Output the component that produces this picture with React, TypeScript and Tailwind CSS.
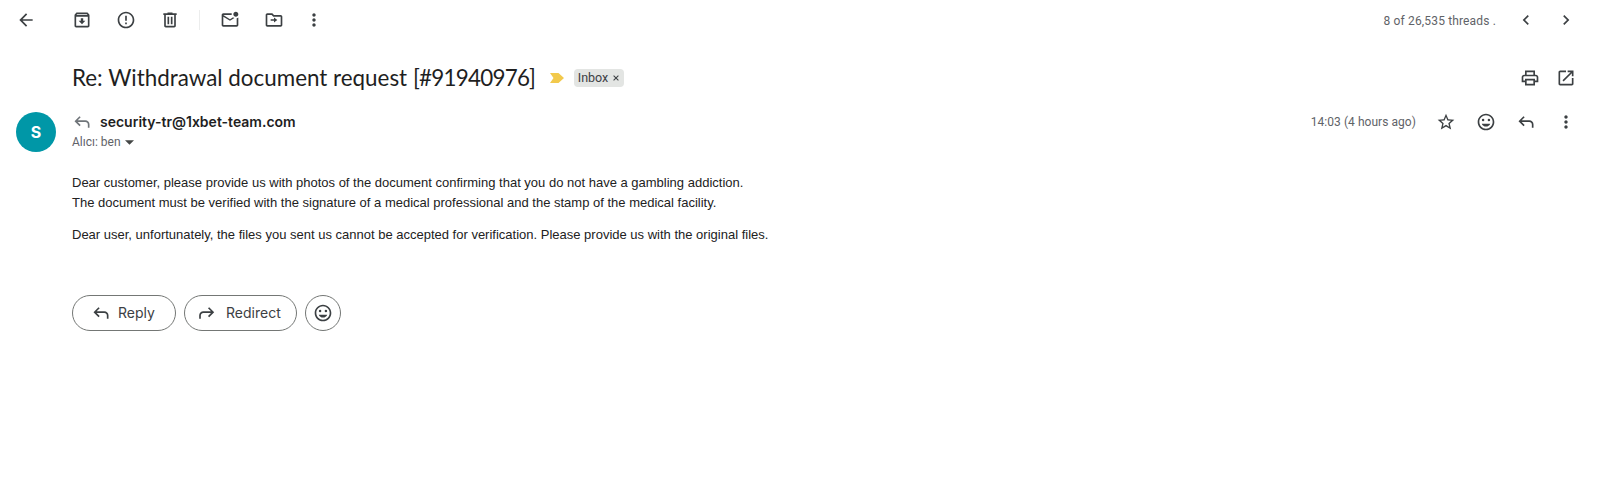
const paths = {
  back: "M20 11H7.83l5.59-5.59L12 4l-8 8 8 8 1.41-1.41L7.83 13H20v-2z",
  archive: "M20.54 5.23l-1.39-1.68C18.88 3.21 18.47 3 18 3H6c-.47 0-.88.21-1.16.55L3.46 5.23C3.17 5.57 3 6.02 3 6.5V19c0 1.1.9 2 2 2h14c1.1 0 2-.9 2-2V6.5c0-.48-.17-.93-.46-1.27zM6.24 5h11.52l.83 1H5.42l.82-1zM5 19V8h14v11H5zm8.45-9h-2.9v3H8l4 4 4-4h-2.55z",
  report: "M11 15h2v2h-2zm0-8h2v6h-2zm.99-5C6.47 2 2 6.48 2 12s4.47 10 9.99 10C17.52 22 22 17.52 22 12S17.52 2 11.99 2zM12 20c-4.42 0-8-3.58-8-8s3.58-8 8-8 8 3.58 8 8-3.58 8-8 8z",
  trash: "M15 4V3H9v1H4v2h1v13c0 1.1.9 2 2 2h10c1.1 0 2-.9 2-2V6h1V4h-5zm2 15H7V6h10v13zM9 8h2v9H9zm4 0h2v9h-2z",
  unread: "M22 8.98V18c0 1.1-.9 2-2 2H4c-1.1 0-2-.9-2-2V6c0-1.1.9-2 2-2h10.1c-.06.32-.1.66-.1 1 0 .34.04.68.1 1H4l8 5 3.67-2.29c.47.43 1.02.76 1.63.98L12 13 4 8v10h16V9.9c.74-.15 1.42-.48 2-.92zM16 5c0 1.66 1.34 3 3 3s3-1.34 3-3-1.34-3-3-3-3 1.34-3 3z",
  move: "M20 6h-8l-2-2H4c-1.11 0-1.99.89-1.99 2L2 18c0 1.11.89 2 2 2h16c1.11 0 2-.89 2-2V8c0-1.11-.89-2-2-2zm0 12H4V6h5.17l2 2H20v10zm-8-3v-2H8v-2h4V9l4 3-4 3z",
  more: "M12 8c1.1 0 2-.9 2-2s-.9-2-2-2-2 .9-2 2 .9 2 2 2zm0 2c-1.1 0-2 .9-2 2s.9 2 2 2 2-.9 2-2-.9-2-2-2zm0 6c-1.1 0-2 .9-2 2s.9 2 2 2 2-.9 2-2-.9-2-2-2z",
  prev: "M15.41 7.41 14 6l-6 6 6 6 1.41-1.41L10.83 12z",
  next: "M10 6 8.59 7.41 13.17 12l-4.58 4.59L10 18l6-6z",
  print: "M19 8h-1V3H6v5H5c-1.66 0-3 1.34-3 3v6h4v4h12v-4h4v-6c0-1.66-1.34-3-3-3zM8 5h8v3H8V5zm8 14H8v-4h8v4zm4-4h-2v-2H6v2H4v-4c0-.55.45-1 1-1h14c.55 0 1 .45 1 1v4z",
  open: "M19 19H5V5h7V3H5c-1.11 0-2 .9-2 2v14c0 1.1.89 2 2 2h14c1.1 0 2-.9 2-2v-7h-2v7zM14 3v2h3.59l-9.83 9.83 1.41 1.41L19 6.41V10h2V3h-7z",
  star: "M22 9.24l-7.19-.62L12 2 9.19 8.63 2 9.24l5.46 4.73L5.82 21 12 17.27 18.18 21l-1.63-7.03L22 9.24zM12 15.4l-3.76 2.27 1-4.28-3.32-2.88 4.38-.38L12 6.1l1.71 4.04 4.38.38-3.32 2.88 1 4.28L12 15.4z",
  smile: "M11.99 2C6.47 2 2 6.48 2 12s4.47 10 9.99 10C17.52 22 22 17.52 22 12S17.52 2 11.99 2zM12 20c-4.42 0-8-3.58-8-8s3.58-8 8-8 8 3.58 8 8-3.58 8-8 8zM8.5 11a1.5 1.5 0 1 0 0-3 1.5 1.5 0 0 0 0 3zm7 0a1.5 1.5 0 1 0 0-3 1.5 1.5 0 0 0 0 3zM12 17.5c2.33 0 4.31-1.46 5.11-3.5H6.89c.8 2.04 2.78 3.5 5.11 3.5z",
  reply: "M19 19v-4q0-1.25-.875-2.125T16 12H6.825l3.6 3.6L9 17l-6-6 6-6 1.425 1.4-3.6 3.6H16q2.075 0 3.538 1.463T21 15v4z",
  forward: "M5 19v-4q0-2.075 1.463-3.537T10 10h9.175l-3.6-3.6L17 5l6 6-6 6-1.425-1.4 3.6-3.6H10q-1.25 0-2.125.875T7 15v4z",
};

const Icon = ({ d, className = "w-5 h-5 text-[#3c4043]" }: { d: string; className?: string }) => (
  <svg viewBox="0 0 24 24" fill="currentColor" className={className}>
    <path d={d} />
  </svg>
);

const ToolButton = ({ d }: { d: string }) => (
  <button className="w-5 h-5 flex items-center justify-center">
    <Icon d={d} className="w-5 h-5 shrink-0 text-[#3c4043]" />
  </button>
);

const PillButton = ({ d, label, className }: { d: string; label: string; className: string }) => (
  <button className={`h-9 rounded-full border border-[#747775] flex items-center text-sm text-[#3c4043] font-['Inter',sans-serif] ${className}`}>
    <Icon d={d} className="w-5 h-5 text-[#3c4043]" />
    <span>{label}</span>
  </button>
);

export default function App() {
  return (
    <div className="w-[1606px] h-[477px] bg-white overflow-hidden font-['Roboto',sans-serif]">
      {/* top toolbar */}
      <div className="h-10 flex items-center pl-4 pr-[30px]">
        <ToolButton d={paths.back} />
        <div className="ml-[36px] flex items-center gap-6">
          <ToolButton d={paths.archive} />
          <ToolButton d={paths.report} />
          <ToolButton d={paths.trash} />
        </div>
        <div className="ml-[19px] w-px h-5 bg-[#eceded]" />
        <div className="ml-[20px] flex items-center gap-6">
          <ToolButton d={paths.unread} />
          <ToolButton d={paths.move} />
        </div>
        <div className="ml-5">
          <ToolButton d={paths.more} />
        </div>
        <span className="ml-auto pt-px text-xs tracking-[0.15px] text-[#5f6368]">8 of 26,535 threads .</span>
        <div className="ml-5 flex items-center gap-5">
          <ToolButton d={paths.prev} />
          <ToolButton d={paths.next} />
        </div>
      </div>

      {/* subject */}
      <div className="mt-[22px] h-8 flex items-center pl-[72px] pr-[30px]">
        <h1 className="w-[464px] whitespace-nowrap text-[22.4px] leading-8 text-[#1f1f1f] font-['Lato',sans-serif]">
          Re: Withdrawal document request <span className="tracking-[-0.75px]">[#91940976]</span>
        </h1>
        <svg viewBox="0 0 14 12" className="ml-[14px] w-[14px] h-3 fill-[#f2c94c]">
          <path d="M0 1h8.5L14 6l-5.5 5H0l3.5-5z" />
        </svg>
        <span className="ml-[10px] h-[18px] w-[50px] rounded bg-[#e3e5e3] flex items-center justify-center gap-1 text-[12.5px] text-[#3c4043]">
          Inbox
          <svg viewBox="0 0 10 10" className="w-2 h-2 stroke-[#3c4043]">
            <path d="M2 2l6 6M8 2l-6 6" strokeWidth="1.3" />
          </svg>
        </span>
        <div className="ml-auto flex items-center gap-4">
          <ToolButton d={paths.print} />
          <ToolButton d={paths.open} />
        </div>
      </div>

      {/* message header */}
      <div className="mt-[18px] flex pl-4 pr-[30px]">
        <div className="w-10 h-10 rounded-full bg-[#0097a7] text-white flex items-center justify-center text-base font-bold font-['Inter',sans-serif]">S</div>
        <div className="ml-4">
          <div className="h-5 flex items-center">
            <Icon d={paths.reply} className="w-5 h-5 text-[#70757a]" />
            <span className="ml-2 text-sm font-semibold text-[#1f1f1f] font-['Inter',sans-serif]">security-tr@1xbet-team.com</span>
          </div>
          <div className="h-5 flex items-center text-xs text-[#5f6368]">
            Alıcı: ben
            <svg viewBox="0 0 10 5" className="ml-1 w-[9px] h-[5px] fill-[#444746]">
              <path d="M0 0h10L5 5z" />
            </svg>
          </div>
        </div>
        <div className="ml-auto flex items-start">
          <span className="text-xs leading-5 tracking-[0.05px] text-[#5f6368]">14:03 (4 hours ago)</span>
          <div className="ml-[20px] flex items-center gap-5">
            <ToolButton d={paths.star} />
            <ToolButton d={paths.smile} />
            <ToolButton d={paths.reply} />
            <ToolButton d={paths.more} />
          </div>
        </div>
      </div>

      {/* body */}
      <div className="mt-[21px] pl-[72px] text-[13px] leading-5 text-[#222222] font-['Liberation_Sans',sans-serif]">
        <p>Dear customer, please provide us with photos of the document confirming that you do not have a gambling addiction.</p>
        <p>The document must be verified with the signature of a medical professional and the stamp of the medical facility.</p>
        <p className="mt-3">Dear user, unfortunately, the files you sent us cannot be accepted for verification. Please provide us with the original files.</p>
      </div>

      {/* actions */}
      <div className="mt-[50px] pl-[72px] flex items-center gap-2">
        <PillButton d={paths.reply} label="Reply" className="w-[104px] pl-[18px] gap-[7px]" />
        <PillButton d={paths.forward} label="Redirect" className="w-[113px] pl-[10px] gap-[11px]" />
        <button className="w-9 h-9 rounded-full border border-[#747775] flex items-center justify-center">
          <Icon d={paths.smile} className="w-5 h-5 text-[#3c4043]" />
        </button>
      </div>
    </div>
  );
}
